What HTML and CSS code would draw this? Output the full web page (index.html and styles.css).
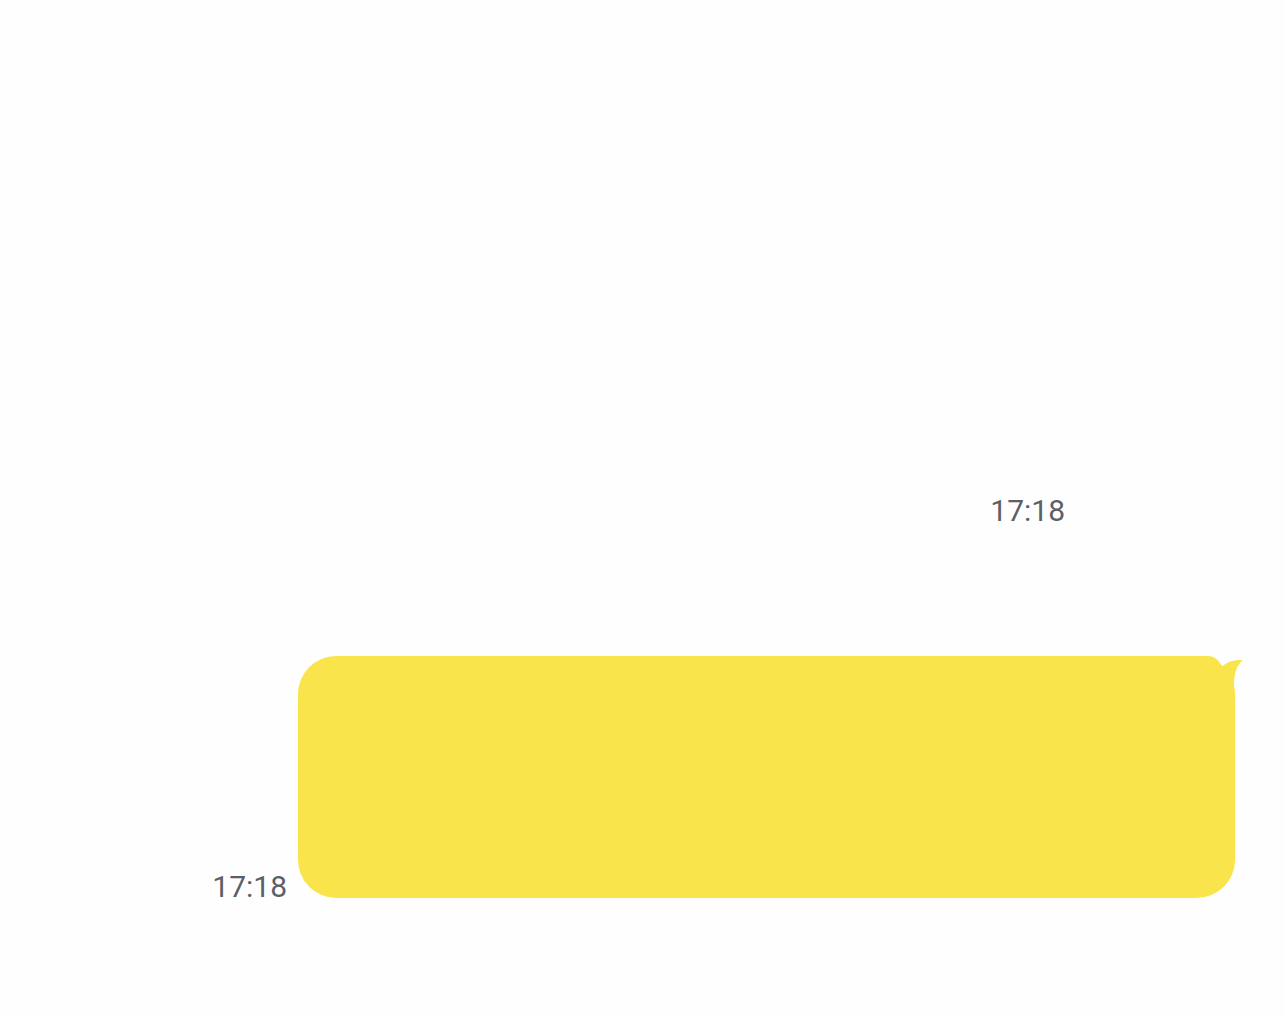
FILE: index.html
```html
<!DOCTYPE html>
<html>
<head>
<meta charset="utf-8">
<link rel="stylesheet" href="styles.css">
</head>
<body>
<div class="chat">
  <div class="row row-first">
    <span class="time">17:18</span>
  </div>
  <div class="row row-mine">
    <span class="time">17:18</span>
    <div class="bubble">
      <svg class="tail" width="50" height="44" viewBox="0 0 50 44"><path d="M0 0 H14 C21 0 25 4 28 11 C33 5 40 4 49 4 C43 9 40 17 40 27 V44 H0 Z" fill="#f9e54b"/></svg>
    </div>
  </div>
</div>
</body>
</html>
```
FILE: styles.css
```css
html, body {
  margin: 0;
  padding: 0;
  background: #fefefe;
}
.chat {
  width: 1284px;
  height: 1017px;
  display: flex;
  flex-direction: column;
  font-family: Roboto, "Noto Sans", sans-serif;
}
.row {
  display: flex;
  justify-content: flex-end;
  align-items: flex-end;
}
.row-first {
  margin-top: 493px;
  padding-right: 219px;
}
.row-mine {
  margin-top: 127px;
  padding-right: 49px;
  gap: 11px;
}
.time {
  font-size: 30px;
  line-height: 36px;
  color: #5b6067;
}
.row-mine .time {
  margin-bottom: -7px;
}
.bubble {
  position: relative;
  width: 937px;
  height: 242px;
  background: #f9e54b;
  border-radius: 38px;
}
.tail {
  position: absolute;
  top: 0;
  right: -9px;
  display: block;
}
```
